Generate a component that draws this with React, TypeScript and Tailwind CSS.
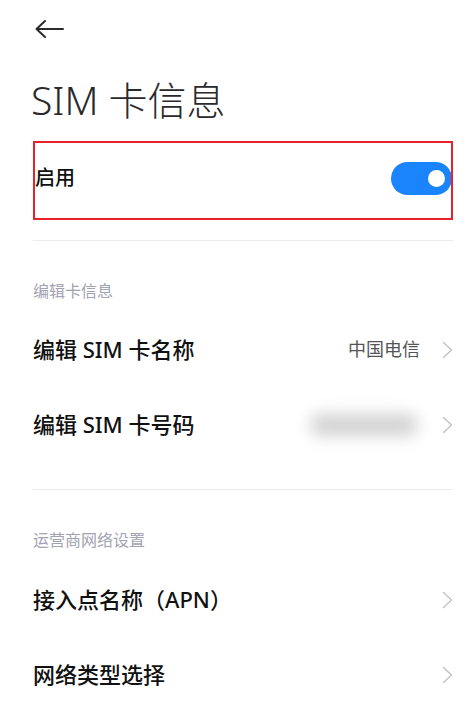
import { ReactNode } from 'react';

const font = { fontFamily: '"Noto Sans", "Noto Sans CJK SC", sans-serif' };

const Chevron = () => (
  <svg width="11" height="18" viewBox="0 0 11 18" fill="none" className="shrink-0">
    <path d="M1.5 1.5 L9.5 9 L1.5 16.5" stroke="#c2c2c6" strokeWidth="1.4" strokeLinecap="round" strokeLinejoin="round" />
  </svg>
);

const Row = ({ title, right }: { title: string; right?: ReactNode }) => (
  <div className="h-[75px] flex items-center justify-between">
    <span className="text-[22px] font-medium text-[#111]">{title}</span>
    <div className="flex items-center gap-[22px]">
      {right}
      <Chevron />
    </div>
  </div>
);

const SectionHeader = ({ label }: { label: string }) => (
  <div className="h-[72px] flex items-end pb-[12px]">
    <span className="text-[16px] leading-[20px] text-[#a3a2b2]">{label}</span>
  </div>
);

export default function App() {
  return (
    <div className="w-[474px] h-[709px] overflow-hidden bg-white pl-[33px] pr-[21px]" style={font}>
      <div className="h-[58px] flex items-center">
        <svg width="30" height="20" viewBox="0 0 30 20" fill="none" className="ml-[2px]">
          <path d="M1.5 10 H28 M10 2 L1.5 10 L10 18" stroke="#2b2b2b" strokeWidth="2" strokeLinecap="round" strokeLinejoin="round" />
        </svg>
      </div>

      <div className="h-[82px] flex items-center -ml-[2px]">
        <h1 className="text-[39px] font-light text-[#2a2a2a] leading-none">SIM 卡信息</h1>
      </div>

      <div className="relative h-[76px] flex items-center justify-between">
        <span className="text-[20px] font-medium text-[#111] ml-[2px]">启用</span>
        <div className="w-[61px] h-[33px] rounded-full bg-[#1a84fc] flex items-center justify-end pr-[7px] mr-[1px]">
          <div className="w-[17px] h-[17px] rounded-full bg-white" />
        </div>
        <div className="absolute left-0 right-0 top-[1px] h-[79px] border-2 border-[#e8212b] pointer-events-none" />
      </div>

      <div className="mt-[24px] h-px bg-[#ececec]" />

      <div className="h-[71px] flex items-end pb-[11px]">
        <span className="text-[16px] leading-[20px] text-[#a3a2b2]">编辑卡信息</span>
      </div>
      <Row title="编辑 SIM 卡名称" right={<span className="text-[18px] text-[#555]">中国电信</span>} />
      <Row
        title="编辑 SIM 卡号码"
        right={<div className="w-[108px] h-[22px] rounded-full bg-[#d2d2d2] blur-[8px] mr-[2px]" />}
      />

      <div className="mt-[27px] h-px bg-[#ececec]" />

      <SectionHeader label="运营商网络设置" />
      <Row title="接入点名称（APN）" />
      <Row title="网络类型选择" />
    </div>
  );
}
